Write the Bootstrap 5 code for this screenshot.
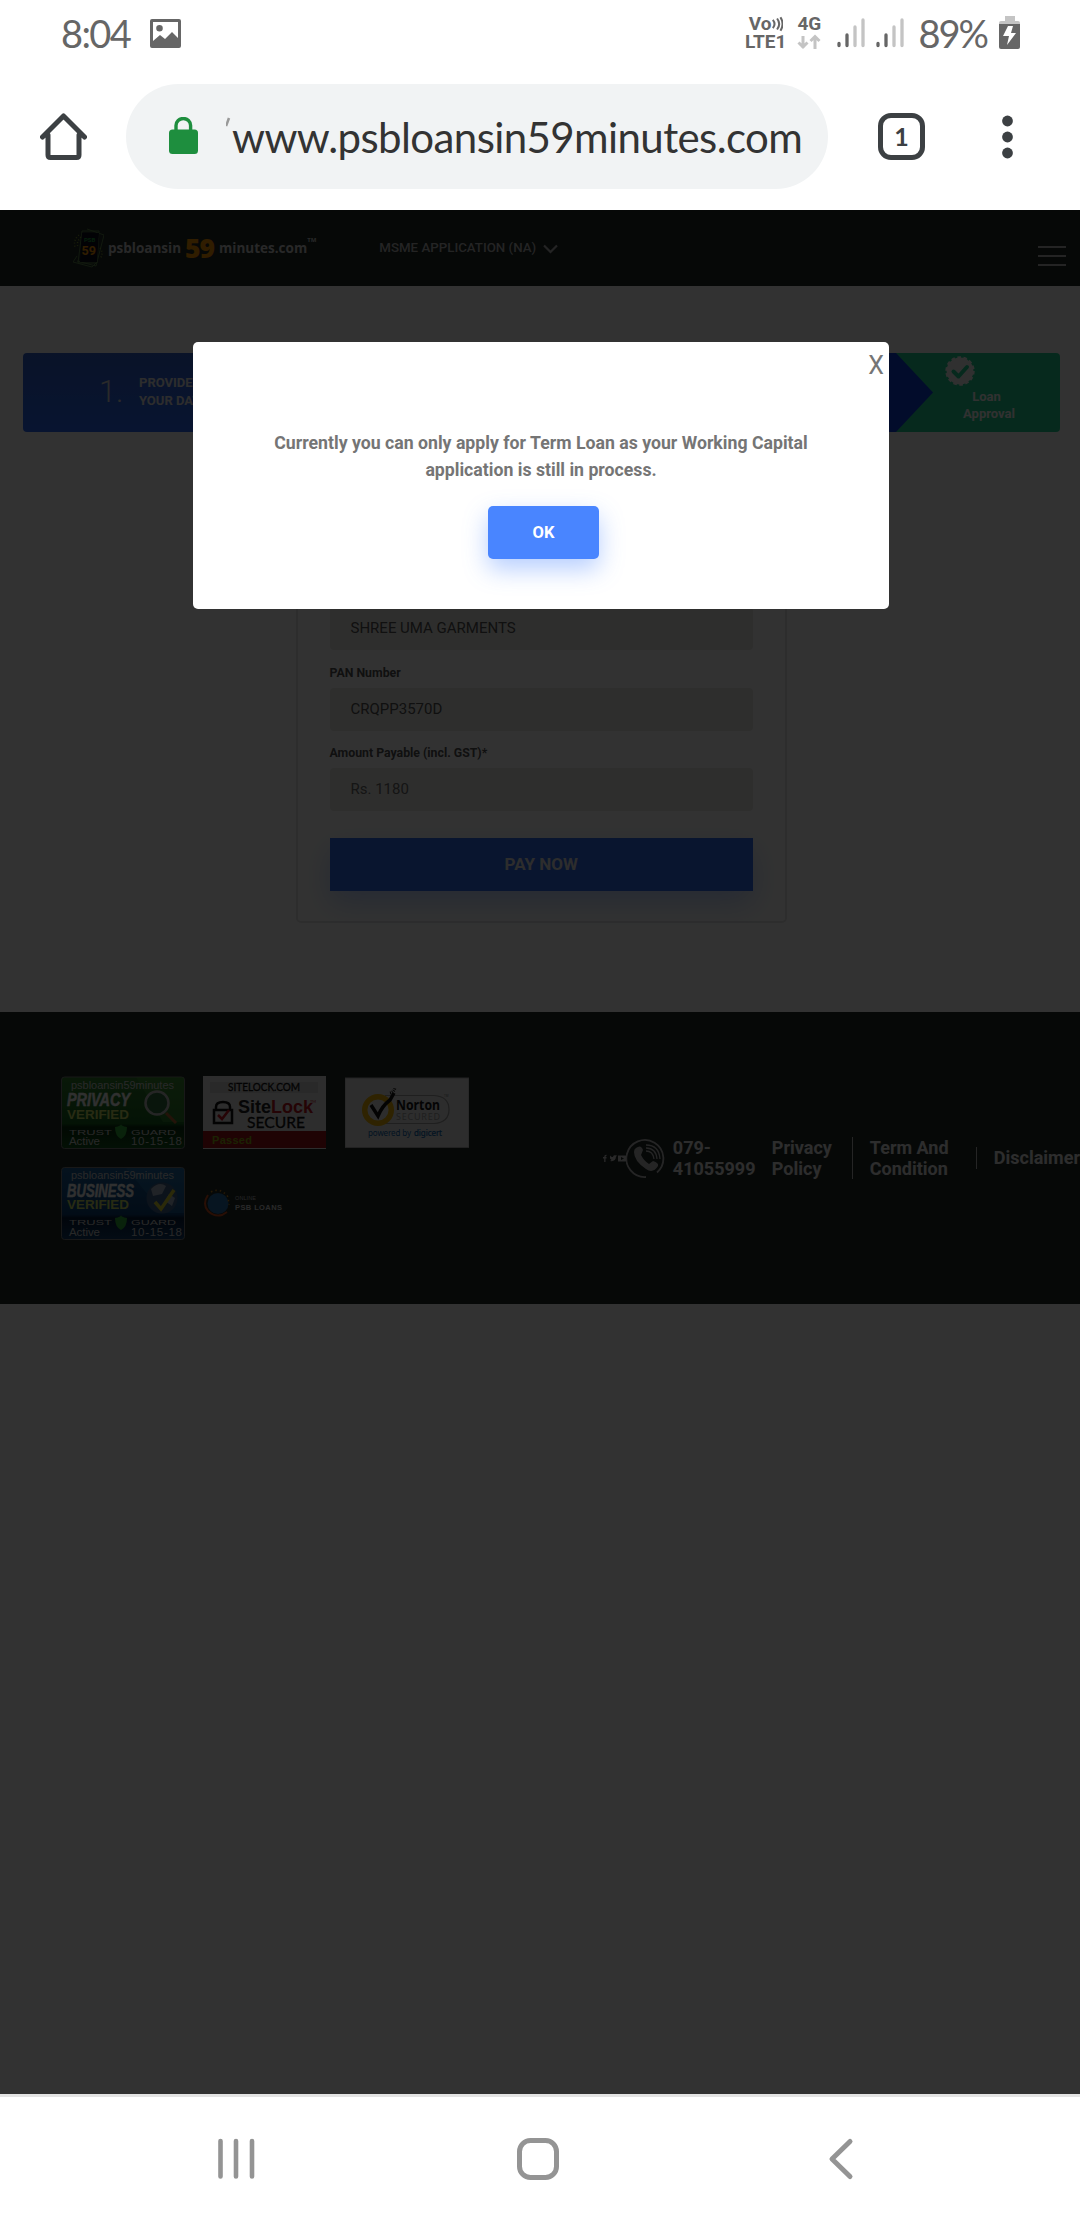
<!DOCTYPE html>
<html lang="en">
<head>
<meta charset="utf-8">
<meta name="viewport" content="width=device-width, initial-scale=1">
<title>psbloansin59minutes.com</title>
<link href="https://cdn.jsdelivr.net/npm/bootstrap@5.3.0/dist/css/bootstrap.min.css" rel="stylesheet">
<style>
body{width:1080px;height:2220px;overflow:hidden;background:#fff;font-family:Roboto,"Liberation Sans",sans-serif;color:#333}
svg{display:block;flex:none}
.hand{font-family:Lato,"Open Sans",sans-serif;white-space:nowrap}
.status-bar{height:66px;color:#666;padding:0 60px 0 61px}
.status-bar .hand{font-size:38px;line-height:68px;letter-spacing:-1.6px}
.net{font-weight:700;font-size:19px;line-height:18px;color:#666}
.chrome-bar{height:144px;padding:18px 67px 21px 40px}
.omni{width:702px;height:105px;border-radius:53px;background:#f1f3f4;margin-left:39px;padding-left:43px}
.omni .hand{font-size:42px;color:#333;line-height:1;letter-spacing:-.6px}
.tab-count{width:47px;height:47px;border:5.5px solid #3c4043;border-radius:13px;margin-left:50px;font-size:25px;font-weight:700;color:#3c4043}
.site{height:1884px;background:#fbfbfb;overflow:hidden}
.shade{position:absolute;inset:0;background:rgba(0,0,0,.8);z-index:2}
.site-nav{height:76px;background:#1e2826;padding:0 14px 0 73px}
.brand{font-family:"Open Sans",sans-serif;font-weight:700;color:#c8c8c8;margin-left:4px;line-height:30px}
.brand-word{font-size:13.5px}
.brand-num{font-size:26.5px;font-weight:800;color:#f09000;margin:0 5px 0 4px;letter-spacing:-1px}
.app-menu{font-size:13.3px;font-weight:500;color:#b4b4b4;margin-left:63px;margin-top:-1px}
.steps{margin:67px 20px 0 23px;height:79px;border-radius:4px;overflow:hidden}
.step-one{width:310px;background:linear-gradient(#325fc8,#2866f0);padding-left:76px;color:#d2d2d2}
.step-num{font-size:30.5px;font-weight:300;width:40px;margin-top:-2px}
.step-label{font-size:13px;font-weight:700;line-height:18px;color:#e0e0e0;white-space:nowrap;margin-top:-2px}
.step-mid{background:#0a3ed4}
.step-done{width:171px;background:#20cd90;color:#f4f4f4;font-size:13px;font-weight:700;line-height:17px}
.pay-card{width:491px;height:483px;margin:8px 0 0 295.5px;border:2px solid #e0e0e0;border-radius:5px;padding:90px 31.5px 0 32px}
.pay-card .fld{height:43px;background:#e6e6e0;border-radius:4px;font-size:15px;line-height:42px;padding:0 21px;color:#505050;border:0;margin:0;width:423.5px}
.pay-card .lbl{font-size:12.3px;font-weight:700;line-height:15px;margin:15px 0 7px;color:#505050;display:block;height:15px}
.pay-btn{margin-top:27px;width:423.5px;height:53px;border-radius:0;background:#2d69e8;color:#e0e0e0;border:0;font-size:17px;font-weight:700;padding:0;box-shadow:0 12px 30px rgba(73,133,255,.35)}
.foot{margin-top:89px;height:292px;background:#1e2826;padding:64px 0 0 61px}
.seals{width:440px}
.foot-link{font-size:18px;font-weight:700;line-height:21.3px;color:#e0e0e0;white-space:nowrap}
.notice{position:absolute;z-index:3;left:193px;top:131.5px;width:696px;height:267px;background:#fff;border-radius:5px;padding-top:88px}
.notice p{font-size:17.7px;font-weight:700;line-height:27px;color:#757575;margin:0}
.ok-btn{width:110.5px;height:53px;border:0;border-radius:5px;background:#4985ff;color:#fff;font-size:16.5px;font-weight:700;margin:22.500px 0 0 5px;padding:1px 0 0;box-shadow:0 10px 25px rgba(73,133,255,.4)}
.x-close{position:absolute;right:5px;top:8px;font-size:25px;line-height:32px;color:#757575}
.sys-nav{height:126px;border-top:3px solid #e3e3e3}
</style>
</head>
<body>
<header>
  <div class="status-bar d-flex align-items-center">
    <span class="hand">8:04</span>
    <svg width="31" height="29" viewBox="0 0 31 29" style="margin-left:20px"><path fill="#666" fill-rule="evenodd" d="M2 0h27q2 0 2 2v25q0 2-2 2H2q-2 0-2-2V2Q0 0 2 0ZM3 3v19l7-6 5 4 7-7 6 6V3ZM9.500 6a3.300 3.300 0 1 1 0 6.600 3.300 3.300 0 0 1 0-6.600Z"/></svg>
    <div class="d-flex align-items-center ms-auto">
      <div class="net text-center"><div>Vo<svg class="d-inline-block" width="11" height="18" viewBox="0 0 13 18" fill="none" stroke="#666" stroke-width="2.400"><path d="M1 4q4 5 0 10M6 2.500q5 6.500 0 13M10 1q5 8 0 16" /></svg></div><div>LTE1</div></div>
      <div class="net" style="margin-left:11px"><div>4G</div><svg width="24" height="18" viewBox="0 0 24 18" fill="none" stroke="#c4c4c4" stroke-width="3"><path d="M6 3v12M1.500 9.500 6 14l4.500-4.500M18 16V3M13.500 8 18 3.500 22.500 8"/></svg></div>
      <svg width="68" height="30" viewBox="0 0 68 30" style="margin-left:16px" stroke-width="3.300" stroke-linecap="round"><g stroke="#666"><path d="M2 25.500v2M10 17v10.500M41 25.500v2M49 17v10.500"/></g><g stroke="#c4c4c4"><path d="M18 9v18.500M26 2v25.500M57 9v18.500M65 2v25.500"/></g></svg>
      <span class="hand" style="margin-left:13px;letter-spacing:-2px">89%</span>
      <svg width="21" height="34" viewBox="0 0 21 34" style="margin-left:12px"><path fill="#c4c4c4" d="M6 0h10v5h3q2 0 2 2v2H0V7q0-2 2-2h4Z"/><path fill="#666" d="M0 8h21v23q0 2-2 2H2q-2 0-2-2Z"/><path fill="#fff" d="M9 10h5l-2 7h5L8 29l2-9H4Z"/></svg>
    </div>
  </div>
  <div class="chrome-bar d-flex align-items-center">
    <svg width="47" height="47" viewBox="0 0 47 47" fill="none" stroke="#3c4043" stroke-width="5" stroke-linecap="round" stroke-linejoin="round"><path d="M8 22v20q0 2.500 2.500 2.500h26q2.500 0 2.500-2.500V22M2.500 24 23.500 3l21 21"/></svg>
    <div class="omni d-flex align-items-center">
      <svg width="29" height="37" viewBox="0 0 29 37" style="margin-top:-2px"><rect y="12.500" width="29" height="24.500" rx="3.500" fill="#1e8e3e"/><path d="M7 14V8.500a7.300 7 0 0 1 14.600 0V14" fill="none" stroke="#1e8e3e" stroke-width="3.400"/></svg>
      <svg width="6" height="12" viewBox="0 0 6 12" style="margin:-28px 0 0 28px"><path d="M0 9 3 1" stroke="#999" stroke-width="2.500"/></svg>
      <span class="hand">www.psbloansin59minutes.com</span>
    </div>
    <div class="tab-count d-flex align-items-center justify-content-center hand">1</div>
    <svg width="11" height="44" viewBox="0 0 11 44" class="ms-auto" fill="#3c4043"><circle cx="5.500" cy="6" r="5.400"/><circle cx="5.500" cy="22" r="5.400"/><circle cx="5.500" cy="38" r="5.400"/></svg>
  </div>
</header>

<main class="site position-relative">
  <nav class="site-nav d-flex align-items-center">
    <svg width="31" height="40" viewBox="0 0 31 40"><g fill="none" stroke="#567c45" stroke-width="1"><path d="M9 3h17l-2 32H5Z"/><path d="M14 1l17 6-8 31-19-5"/><path d="M4 28 0 34l19 5 4-4"/></g><g fill="none" stroke="#7a8f2e" stroke-width="1.500" stroke-dasharray="1 2"><path d="M6 7q-6 5-4 12M27 20q4 5 0 11M8 9q-5 5-3 10"/></g><path d="M9 5h17l-2 29H7Z" fill="#0c0e1c"/><text x="11" y="13.500" font-size="6" font-weight="700" fill="#1f9a3c">PSB</text><text x="8.500" y="27" font-size="12" font-weight="700" fill="#f09000" textLength="14.500" lengthAdjust="spacingAndGlyphs">59</text></svg>
    <div class="brand d-flex align-items-center"><span class="brand-word">psbloansin</span><span class="brand-num">59</span><span class="brand-word">minutes.com</span><span style="font-size:6px;margin-top:-17px">TM</span></div>
    <div class="app-menu d-flex align-items-center"><span>MSME APPLICATION (NA)</span><svg width="15" height="10" viewBox="0 0 15 10" style="margin:2px 0 0 7px" fill="none" stroke="#b4b4b4" stroke-width="2.200"><path d="M1 1.500 7.500 8 14 1.500"/></svg></div>
    <svg width="28" height="22" viewBox="0 0 28 22" class="ms-auto" style="margin-top:16px" stroke="#b4b4b4" stroke-width="2"><path d="M0 2h28M0 11h28M0 20h28"/></svg>
  </nav>

  <section class="steps d-flex">
    <div class="step-one d-flex align-items-center"><span class="step-num">1.</span><span class="step-label">PROVIDE<br>YOUR DATA</span></div>
    <div class="step-mid flex-grow-1"></div>
    <div class="step-done d-flex">
      <svg width="44" height="79" viewBox="0 0 44 79"><path d="M0 0h7l37 39.500L7 79H0Z" fill="#0a3ed4"/></svg>
      <div class="flex-grow-1" style="padding:3px 0 0 12px">
        <svg width="30" height="30" viewBox="0 0 30 30"><circle cx="15" cy="15" r="13.400" fill="#f0f0f0"/><circle cx="15" cy="15" r="13.600" fill="none" stroke="#f0f0f0" stroke-width="2.200" stroke-dasharray="3.600 2.503"/><path d="m8.500 15.500 5 5L22 11" fill="none" stroke="#20cd90" stroke-width="4" stroke-linecap="round" stroke-linejoin="round"/></svg>
        <div class="text-center" style="width:88px;margin-top:2px"><div style="margin-left:-5px">Loan</div><div>Approval</div></div>
      </div>
    </div>
  </section>

  <form class="pay-card">
    <label class="lbl">Organization Name</label>
    <div class="fld" style="margin-top:45px">SHREE UMA GARMENTS</div>
    <label class="lbl" style="margin-top:16px">PAN Number</label>
    <div class="fld">CRQPP3570D</div>
    <label class="lbl">Amount Payable (incl. GST)*</label>
    <div class="fld" style="color:#686868">Rs. 1180</div>
    <button type="button" class="btn pay-btn">PAY NOW</button>
  </form>

  <footer class="foot d-flex">
    <div class="seals d-flex flex-wrap align-content-start" style="gap:18px 18px">
      <svg width="124" height="73" viewBox="0 0 124 73" font-family="'Liberation Sans',sans-serif" fill="#c8c8c8"><defs><linearGradient id="gg" x2="0" y2="1"><stop stop-color="#2f7a2c"/><stop offset=".65" stop-color="#155f1d"/><stop offset=".7" stop-color="#082c0e"/><stop offset="1" stop-color="#12531b"/></linearGradient></defs><rect x=".5" y="1" width="123" height="71.500" rx="3" fill="url(#gg)" stroke="#777"/><path d="M75 1h48v45H102Z" fill="#4e9a3a" opacity=".4"/><text x="10" y="12.500" font-size="11" textLength="103" lengthAdjust="spacingAndGlyphs">psbloansin59minutes</text><text x="6" y="29.500" font-size="19" font-weight="700" font-style="italic" fill="#eee" stroke="#eee" stroke-width=".5" textLength="63" lengthAdjust="spacingAndGlyphs">PRIVACY</text><text x="6" y="42.500" font-size="12" font-weight="700" fill="#c8d860" textLength="62" lengthAdjust="spacingAndGlyphs">VERIFIED</text><path d="m105 37 10 10" stroke="#b06030" stroke-width="3"/><circle cx="96" cy="27" r="11.500" fill="#2d6a3d" stroke="#bbb" stroke-width="2.500"/><path d="M54 51q6-1 6-3 0 2 6 3 0 9-6 12-6-3-6-12" fill="#30a838"/><text x="8" y="58.500" font-size="8" textLength="43" lengthAdjust="spacingAndGlyphs">TRUST</text><text x="70" y="58.500" font-size="8" textLength="45" lengthAdjust="spacingAndGlyphs">GUARD</text><text x="8" y="69" font-size="11.500" textLength="31">Active</text><text x="70" y="69" font-size="11.500" textLength="51">10-15-18</text></svg>
      <svg width="123" height="73" viewBox="0 0 123 73" font-family="Lato,sans-serif"><rect width="123" height="73" fill="#e0e0e0"/><rect x="7" y="6" width="108" height="11" fill="#cdcdcd"/><rect y="55" width="123" height="17" fill="#9a1018"/><text x="25" y="15" font-size="10.500" fill="#111" textLength="72" lengthAdjust="spacingAndGlyphs" stroke="#111" stroke-width=".3">SITELOCK.COM</text><path d="M13 34v-3q0-5 7-5t7 5v3" fill="none" stroke="#111" stroke-width="2.500"/><rect x="11" y="34" width="18" height="13" fill="none" stroke="#111" stroke-width="2.500"/><path d="m15 39 4 4 7-9" fill="none" stroke="#c01420" stroke-width="2.500"/><text x="35" y="36.500" font-size="18" font-weight="700" font-family="'Liberation Sans'" fill="#222" textLength="33">Site</text><text x="68" y="36.500" font-size="18" font-weight="700" font-family="'Liberation Sans'" fill="#b81420" textLength="42">Lock</text><text x="107" y="27" font-size="4" fill="#b81420">TM</text><text x="44" y="51.700" font-size="14.500" fill="#111" stroke="#111" stroke-width=".3" textLength="58" lengthAdjust="spacingAndGlyphs">SECURE</text><text x="9" y="68" font-size="11" font-weight="700" font-family="'Liberation Sans'" fill="#8aac10" textLength="40">Passed</text></svg>
      <svg width="124" height="73" viewBox="0 0 124 73" font-family="'Noto Sans',sans-serif" style="margin-left:1px"><rect y="2" width="124" height="69.500" fill="#e0e0e0" stroke="#aaa"/><path d="M40 19.500h49q15 1 15 14 0 13-15 14H40" fill="none" stroke="#999" stroke-width="1.200"/><circle cx="33" cy="34" r="13.300" fill="#e0e0e0" stroke="#e8b008" stroke-width="5.500"/><path d="m26 29 7 11q4-10 12-16l4-7" fill="none" stroke="#111" stroke-width="3.500"/><path d="M45 17q4-1 5-5" fill="none" stroke="#222" stroke-width="3" stroke-dasharray="1 1"/><text x="51" y="33.500" font-size="13.500" font-weight="700" fill="#151515" textLength="44" lengthAdjust="spacingAndGlyphs">Norton</text><text x="51" y="44" font-size="9" fill="#999" textLength="44">SECURED</text><text x="99" y="21" font-size="3" fill="#777">TM</text><text x="23" y="60" font-size="8" fill="#0860a8" textLength="43">powered by</text><text x="69" y="60" font-size="8" fill="#0860a8" stroke="#0860a8" stroke-width=".2" textLength="28">digicert</text></svg>
      <svg width="124" height="73" viewBox="0 0 124 73" font-family="'Liberation Sans',sans-serif" fill="#c8c8c8"><defs><linearGradient id="bb" x2="0" y2="1"><stop stop-color="#1a5c94"/><stop offset=".65" stop-color="#0c3e74"/><stop offset=".7" stop-color="#081c38"/><stop offset="1" stop-color="#103c68"/></linearGradient></defs><rect x=".5" y=".5" width="123" height="72" rx="3" fill="url(#bb)" stroke="#777"/><path d="M65 1h58v45H102Z" fill="#2d80b8" opacity=".35"/><text x="10" y="12" font-size="11" textLength="103" lengthAdjust="spacingAndGlyphs">psbloansin59minutes</text><text x="6" y="29.500" font-size="19" font-weight="700" font-style="italic" fill="#eee" stroke="#eee" stroke-width=".5" textLength="67" lengthAdjust="spacingAndGlyphs">BUSINESS</text><text x="6" y="42" font-size="12" font-weight="700" fill="#c8d860" textLength="62" lengthAdjust="spacingAndGlyphs">VERIFIED</text><circle cx="101" cy="31" r="15.500" fill="#3e5e88"/><path d="M90 22q8-8 15-3l-4 8-9 2ZM108 27l6 4-3 8-7-5Z" fill="#a0aec0"/><path d="m94 35 6 7 13-19" fill="none" stroke="#d8d030" stroke-width="3.500"/><path d="M54 51q6-1 6-3 0 2 6 3 0 9-6 12-6-3-6-12" fill="#30a838"/><text x="8" y="58" font-size="8" textLength="43" lengthAdjust="spacingAndGlyphs">TRUST</text><text x="70" y="58" font-size="8" textLength="45" lengthAdjust="spacingAndGlyphs">GUARD</text><text x="8" y="69" font-size="11.500" textLength="31">Active</text><text x="70" y="69" font-size="11.500" textLength="51">10-15-18</text></svg>
      <svg width="124" height="73" viewBox="0 0 124 73" font-family="'Liberation Sans',sans-serif"><circle cx="15" cy="36.500" r="10.500" fill="#2468a4"/><path d="M5 28q-6 9 0 16 6 6 14 4l5-3" fill="none" stroke="#c84a1c" stroke-width="2"/><path d="M8 25q10-5 17 5l1 8" fill="none" stroke="#c08020" stroke-width="1.600" stroke-dasharray="1.500 3"/><text x="32" y="33" font-size="5.500" fill="#bbb" textLength="21">ONLINE</text><text x="32" y="42.500" font-size="7.500" font-weight="700" fill="#ccc" textLength="47">PSB LOANS</text></svg>
    </div>
    <div class="d-flex align-items-center" style="height:164px;margin-left:125px">
      <svg width="23" height="9" viewBox="0 0 23 9" fill="#ccc"><path d="M1.200 8V4.500H0V3h1.200q0-2.500 2.300-2.300V2Q2.500 2 2.500 3h1v1.500h-1V8ZM7 1.500q1.500 1.800 3 1.500 0-2 2-1.800l2 .3-1 1.300Q12.500 8 7 7L8.500 6 7 4.500ZM15 1.500h8v6h-8Z"/><path d="m18 3 3 1.500L18 6Z" fill="#1e2826"/></svg>
      <svg width="39" height="40" viewBox="0 0 39 40"><path d="M20 39A18.500 18.500 0 1 1 31 34.500" fill="none" stroke="#bbb" stroke-width="1.800"/><path d="M10 10q5-4 7 2l-2 5q3 6 8 9l4-3q6 2 5 5-5 8-12 3Q8 23 8 14q0-3 2-4Z" fill="#bbb"/><path d="M20 13q7 0 8 8M20 10q10 0 11 11M20 7q13 0 14 14" fill="none" stroke="#bbb" stroke-width="1.300"/></svg>
      <div class="foot-link" style="margin-left:8px;width:99px">079-<br>41055999</div>
      <div class="foot-link" style="width:80px">Privacy<br>Policy</div>
      <div class="foot-link" style="border-left:1.500px solid #bbb;padding-left:17px;width:124px">Term And<br>Condition</div>
      <div class="foot-link" style="border-left:1.500px solid #bbb;padding-left:17px">Disclaimer</div>
    </div>
  </footer>

  <div class="shade"></div>
  <div class="notice text-center" role="dialog">
    <span class="x-close">X</span>
    <p>Currently you can only apply for Term Loan as your Working Capital<br>application is still in process.</p>
    <button type="button" class="btn ok-btn">OK</button>
  </div>
</main>

<nav class="sys-nav bg-white">
  <svg width="1080" height="123" viewBox="0 0 1080 123" fill="none" stroke="#949494" stroke-linecap="round"><path d="M220.500 44v35.500M236 44v35.500M252 44v35.500" stroke-width="4.600"/><rect x="519.500" y="43.500" width="37" height="37" rx="11" stroke-width="5"/><path d="M850 44.500 832 62l18 17.500" stroke-width="5" stroke-linejoin="round"/></svg>
</nav>
<script src="https://cdn.jsdelivr.net/npm/bootstrap@5.3.0/dist/js/bootstrap.bundle.min.js"></script>
</body>
</html>
